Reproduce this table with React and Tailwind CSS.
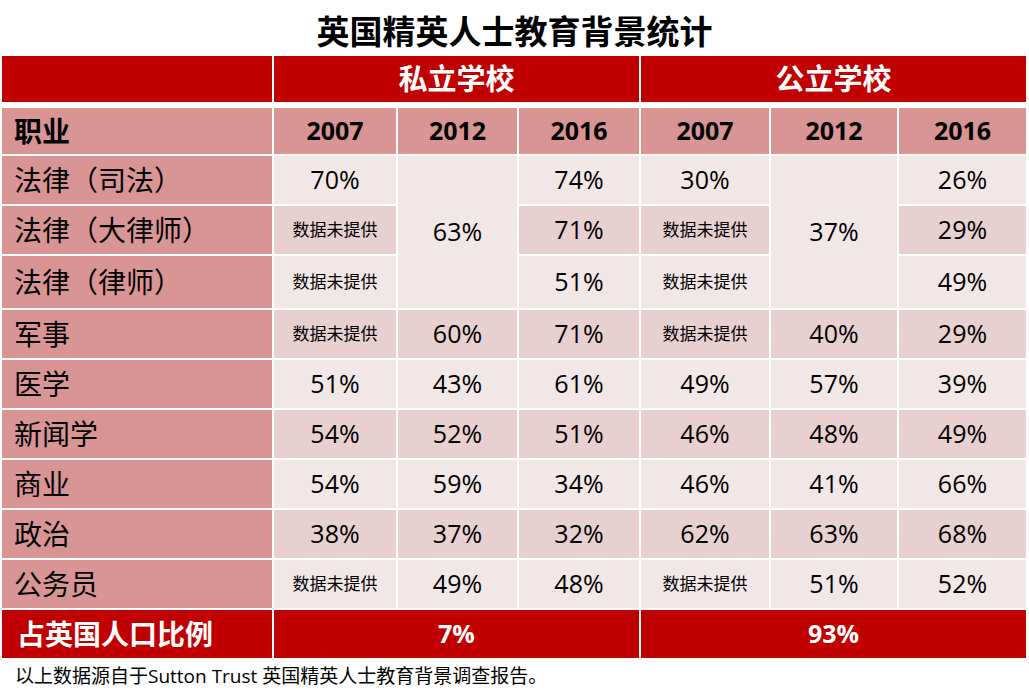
import React from "react";

const F = "font-['Open_Sans','Noto_Sans_CJK_SC',sans-serif]";
const L = "bg-[#f2e7e7]";
const D = "bg-[#e8cfd0]";

function Label({ children }) {
  return (
    <div className="bg-[#d99594] flex items-center pl-[12px] text-[28px] text-black">
      {children}
    </div>
  );
}

function Cell({ v, bg, span }) {
  const na = v === "数据未提供";
  return (
    <div
      className={`${bg} ${span ? "row-span-3" : ""} flex items-center justify-center text-black ${
        na ? "text-[17px]" : "text-[25px]"
      }`}
    >
      {v}
    </div>
  );
}

const rows = [
  { label: "法律（司法）", bg: L, cells: ["70%", { v: "63%", span: true }, "74%", "30%", { v: "37%", span: true }, "26%"] },
  { label: "法律（大律师）", bg: D, cells: ["数据未提供", "71%", "数据未提供", "29%"] },
  { label: "法律（律师）", bg: L, cells: ["数据未提供", "51%", "数据未提供", "49%"] },
  { label: "军事", bg: D, cells: ["数据未提供", "60%", "71%", "数据未提供", "40%", "29%"] },
  { label: "医学", bg: L, cells: ["51%", "43%", "61%", "49%", "57%", "39%"] },
  { label: "新闻学", bg: D, cells: ["54%", "52%", "51%", "46%", "48%", "49%"] },
  { label: "商业", bg: L, cells: ["54%", "59%", "34%", "46%", "41%", "66%"] },
  { label: "政治", bg: D, cells: ["38%", "37%", "32%", "62%", "63%", "68%"] },
  { label: "公务员", bg: L, cells: ["数据未提供", "49%", "48%", "数据未提供", "51%", "52%"] },
];

export default function App() {
  return (
    <div className={`${F} w-[1029px] h-[699px] bg-white overflow-hidden`}>
      <div className="h-[56px] flex items-center justify-center pt-[6px] text-[33px] font-bold text-black leading-none">
        英国精英人士教育背景统计
      </div>
      <div className="ml-[2px] grid grid-cols-[270px_122px_119px_120px_128px_126px_127px] grid-rows-[50px_46px_48px_48px_52px_48px_48px_48px_48px_48px_48px_48px] gap-[2px]">
        <div className="bg-[#c00000] mb-[4px]"></div>
        <div className="col-span-3 bg-[#c00000] mb-[4px] flex items-center justify-center text-white font-bold text-[29px]">
          私立学校
        </div>
        <div className="col-span-3 bg-[#c00000] mb-[4px] flex items-center justify-center text-white font-bold text-[29px]">
          公立学校
        </div>

        <div className="bg-[#d99594] flex items-center pl-[12px] text-[28px] font-bold text-black">职业</div>
        {["2007", "2012", "2016", "2007", "2012", "2016"].map((y, i) => (
          <div key={i} className="bg-[#d99594] flex items-center justify-center text-[25px] font-bold text-black">
            {y}
          </div>
        ))}

        {rows.map((r, ri) => (
          <React.Fragment key={ri}>
            <Label>{r.label}</Label>
            {r.cells.map((c, ci) =>
              typeof c === "string" ? (
                <Cell key={ci} v={c} bg={r.bg} />
              ) : (
                <Cell key={ci} v={c.v} bg={L} span />
              )
            )}
          </React.Fragment>
        ))}

        <div className="bg-[#c00000] flex items-center pl-[15px] text-white font-bold text-[28px]">占英国人口比例</div>
        <div className="col-span-3 bg-[#c00000] flex items-center justify-center text-white font-bold text-[25px]">7%</div>
        <div className="col-span-3 bg-[#c00000] flex items-center justify-center text-white font-bold text-[25px]">93%</div>
      </div>
      <div className="pl-[15px] mt-[6px] text-[19px] leading-[24px] text-black">
        以上数据源自于Sutton Trust 英国精英人士教育背景调查报告。
      </div>
    </div>
  );
}
